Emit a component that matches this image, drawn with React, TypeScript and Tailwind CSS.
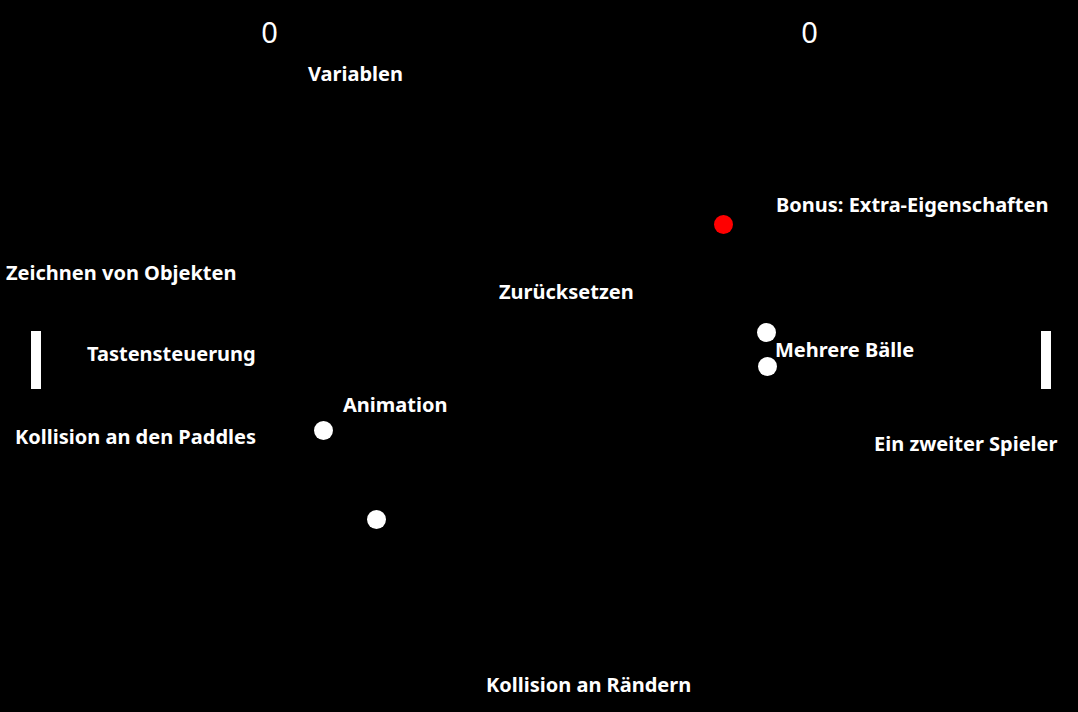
import React from "react";

const labels: { text: string; x: number; y: number }[] = [
  { text: "Variablen", x: 308, y: 64 },
  { text: "Bonus: Extra-Eigenschaften", x: 776, y: 195 },
  { text: "Zeichnen von Objekten", x: 6, y: 263 },
  { text: "Zurücksetzen", x: 499, y: 282 },
  { text: "Tastensteuerung", x: 87, y: 344 },
  { text: "Mehrere Bälle", x: 775, y: 340 },
  { text: "Animation", x: 343, y: 395 },
  { text: "Kollision an den Paddles", x: 15, y: 427 },
  { text: "Ein zweiter Spieler", x: 874, y: 434 },
  { text: "Kollision an Rändern", x: 486, y: 675 },
];

const balls: { x: number; y: number; red?: boolean }[] = [
  { x: 723.5, y: 224, red: true },
  { x: 766.5, y: 332.5 },
  { x: 767.5, y: 366 },
  { x: 323.5, y: 430.5 },
  { x: 376.5, y: 519 },
];

export default function App() {
  return (
    <div
      className="relative w-[1078px] h-[712px] bg-black overflow-hidden text-white"
      style={{ fontFamily: '"Noto Sans", sans-serif' }}
    >
      {/* scores */}
      <div className="absolute left-[219.5px] top-[17px] w-[100px] text-center text-[29px] leading-none font-normal">
        0
      </div>
      <div className="absolute left-[759.5px] top-[17px] w-[100px] text-center text-[29px] leading-none font-normal">
        0
      </div>

      {/* paddles */}
      <div className="absolute left-[31px] top-[331px] w-[10px] h-[58px] bg-white" />
      <div className="absolute left-[1041px] top-[331px] w-[10px] h-[58px] bg-white" />

      {/* balls */}
      {balls.map((b, i) => (
        <div
          key={i}
          className={`absolute w-[19px] h-[19px] rounded-full ${b.red ? "bg-[#ff0000]" : "bg-white"}`}
          style={{ left: b.x - 9.5, top: b.y - 9.5 }}
        />
      ))}

      {/* labels */}
      {labels.map((l, i) => (
        <div
          key={i}
          className="absolute whitespace-nowrap text-[20px] leading-[20px] font-bold"
          style={{ left: l.x, top: l.y }}
        >
          {l.text}
        </div>
      ))}
    </div>
  );
}
